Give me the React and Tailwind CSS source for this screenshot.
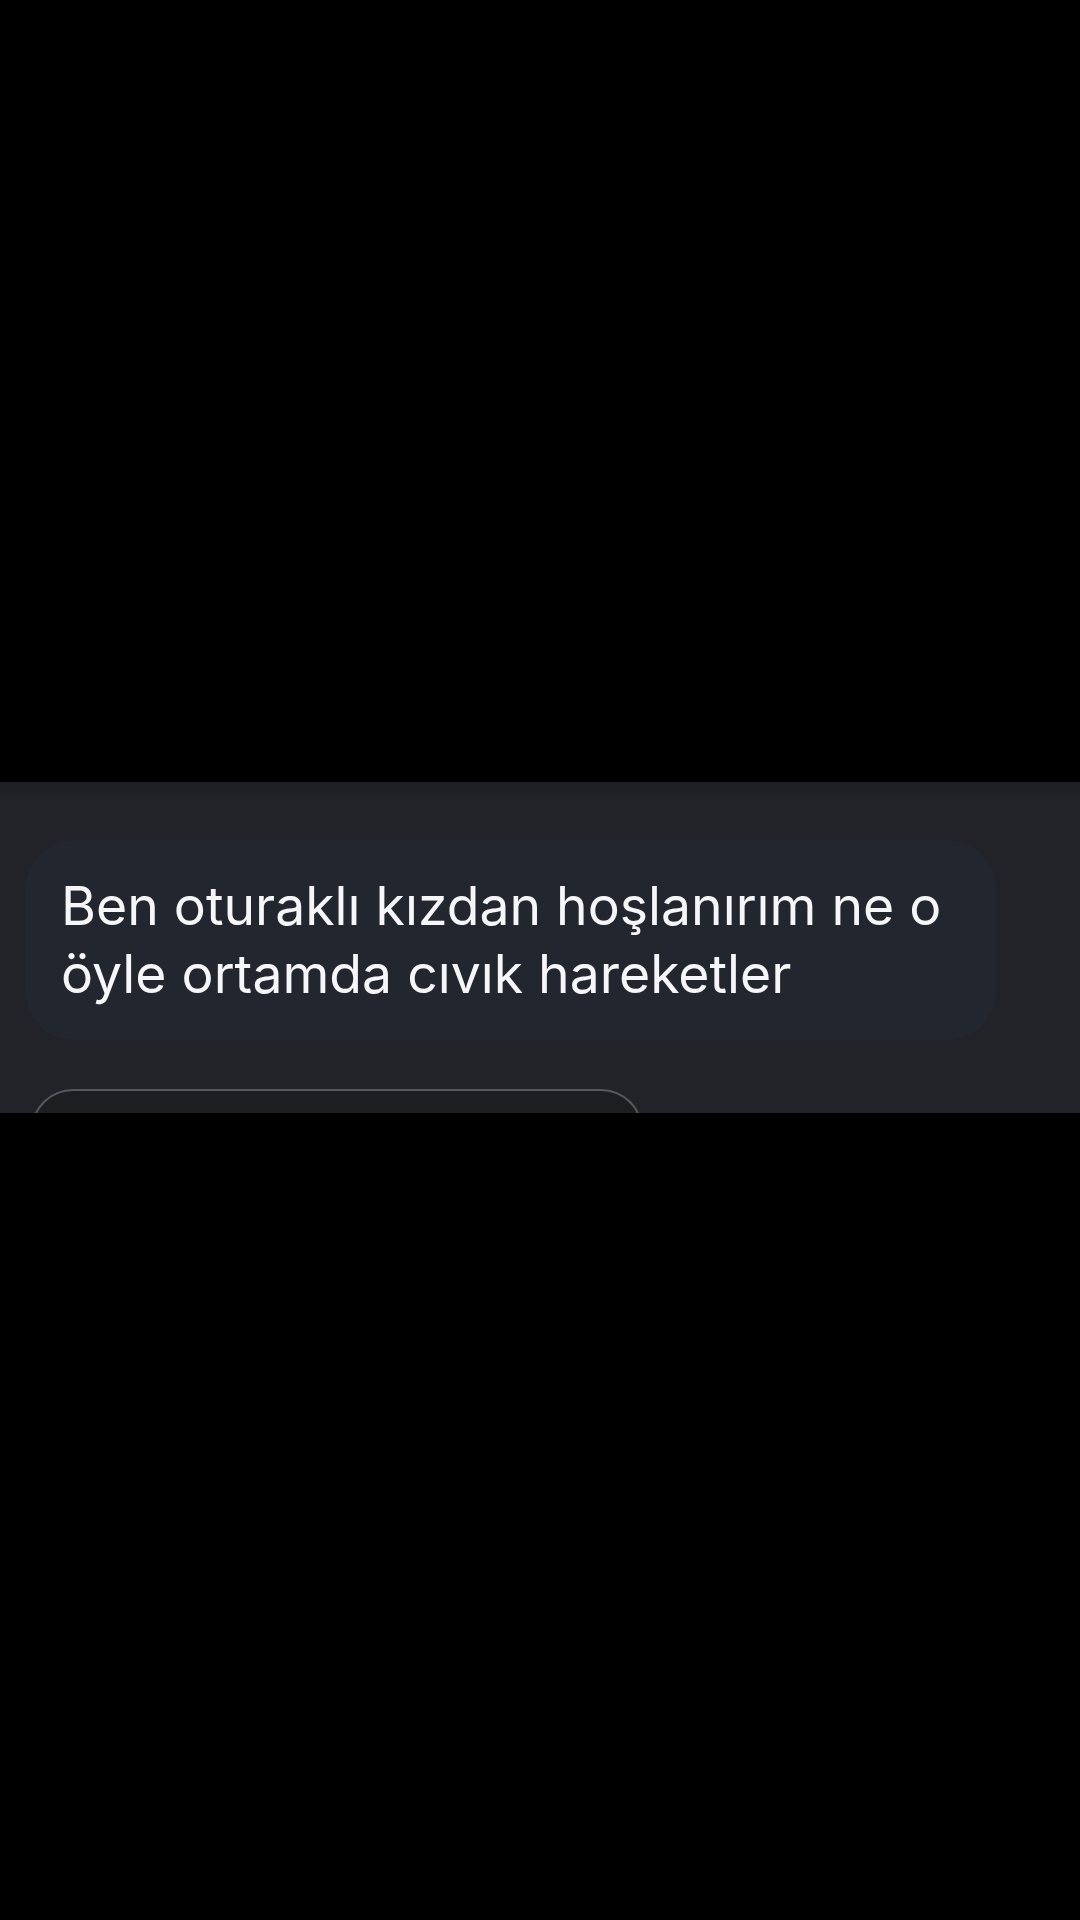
export default function App() {
  return (
    <div className="w-[1080px] h-[1920px] bg-black flex flex-col">
      <div className="h-[782px] shrink-0" />
      <div className="h-[331px] shrink-0 overflow-hidden flex flex-col bg-[#222328] border-t-[12px] border-[#1e2025]">
        <div className="mt-[46px] mx-[26px] w-[970px] rounded-[48px] bg-[#22272f] pl-[35px] pr-[20px] pt-[32px] pb-[32px]">
          <p className="text-[53.5px] leading-[68px] text-[#f6f6f8] font-['Inter',sans-serif]">
            Ben oturaklı kızdan hoşlanırım ne o öyle ortamda cıvık hareketler
          </p>
        </div>
        <div className="mt-[49px] ml-[31px] w-[612px] h-[60px] shrink-0 rounded-t-[42px] border-2 border-b-0 border-[#57585d] bg-[#1d1e22]" />
      </div>
      <div className="flex-1" />
    </div>
  );
}
